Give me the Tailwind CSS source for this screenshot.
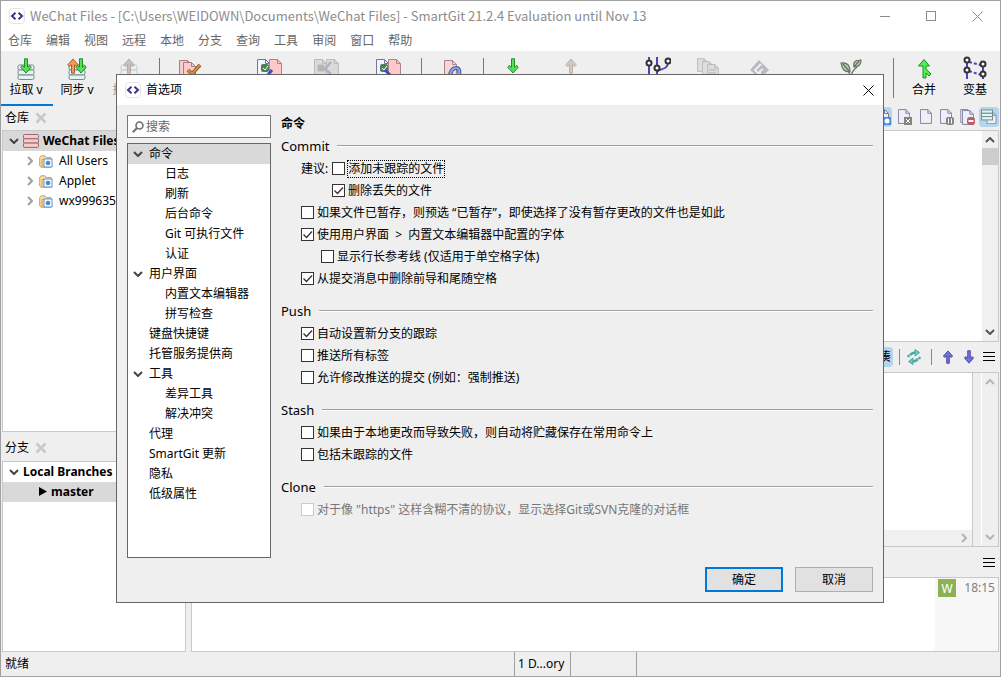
<!DOCTYPE html>
<html lang="zh-CN">
<head>
<meta charset="utf-8">
<title>SmartGit</title>
<script src="https://cdn.jsdelivr.net/npm/@tailwindcss/browser@4"></script>
</head>
<body class="relative h-screen overflow-hidden bg-[#efefef] font-['Noto_Sans','Noto_Sans_CJK_SC',sans-serif] text-[12px] leading-5 text-black">

<svg class="hidden">
  <symbol id="logo" viewBox="0 0 16 16"><rect x=".5" y=".5" width="15" height="15" rx="3" fill="#fff" stroke="#e4e4e8"/><path d="M6.500 4.800 3 8l3.500 3.200M9.500 4.800 13 8l-3.500 3.200" fill="none" stroke="#3c3784" stroke-width="2"/></symbol>
  <symbol id="down" viewBox="0 0 10 6"><path d="M1 1l4 4 4-4" fill="none" stroke="currentColor" stroke-width="2"/></symbol>
  <symbol id="right" viewBox="0 0 6 10"><path d="M1 1l4 4-4 4" fill="none" stroke="currentColor" stroke-width="2"/></symbol>
  <symbol id="cross" viewBox="0 0 12 12"><path d="M1.500 1.500l9 9M10.500 1.500l-9 9" fill="none" stroke="currentColor" stroke-width="2.600"/></symbol>
  <symbol id="thin-x" viewBox="0 0 11 11"><path d="M.5.5l10 10M10.500.5l-10 10" fill="none" stroke="currentColor"/></symbol>
  <symbol id="tick" viewBox="0 0 13 13"><path d="M2.500 6.500l3 3 5.500-6" fill="none" stroke="#333" stroke-width="1.300"/></symbol>
  <symbol id="menu" viewBox="0 0 12 10"><path d="M0 0h12v1H0zM0 4h12v1H0zM0 8h12v1H0z" fill="#000" shape-rendering="crispEdges"/></symbol>
  <symbol id="arrow-down" viewBox="0 0 12 16"><path d="M4.500.8h3v8.400l2.200-1.700 1.600 1.600L6 15 .7 9.100l1.600-1.600 2.200 1.700z" stroke-width="1"/></symbol>
  <symbol id="arrow-up" viewBox="0 0 12 16"><path d="M4.500 15.200h3V6.800l2.200 1.700 1.600-1.600L6 1 .7 6.900l1.600 1.600 2.200-1.700z" stroke-width="1"/></symbol>
  <symbol id="disk" viewBox="0 0 18 16"><g fill="#e4f2f2" stroke="#76898c"><rect x="1" y="1" width="16" height="5" rx="1.500"/><rect x="1" y="6" width="16" height="5" rx="1.500"/><rect x="1" y="11" width="16" height="4.500" rx="1.500"/></g></symbol>
  <symbol id="page" viewBox="0 0 13 16"><path d="M.5.5h8l4 4v11H.5z"/><path d="M8.500.5v4h4" fill="none"/></symbol>
  <symbol id="folder" viewBox="0 0 14 13"><path d="M.7 11V2.500L2 .8h4l1.200 1.700H12v9.700H2z" fill="#f6dfa8" stroke="#d2a052"/><path d="M3 12V4.500h9" fill="none" stroke="#d2a052"/><rect x="5" y="4" width="8" height="8" fill="#fff" stroke="#5e93d2"/><circle cx="9" cy="8" r="2" fill="#4a86cc"/><path d="M6.500 8h5M9 5.500v5M7.200 6.200l3.600 3.600M10.800 6.200L7.200 9.800" stroke="#4a86cc" stroke-width=".8"/></symbol>
</svg>

<div class="flex h-full flex-col border border-[#a0a0a0]">
  <!-- Title bar -->
  <header class="flex h-[30px] shrink-0 items-center bg-white pl-2 pr-4 text-[#8c8c8c]">
    <svg class="size-4"><use href="#logo"/></svg>
    <h1 class="ml-[5px] flex-1 whitespace-nowrap font-['Noto_Sans_CJK_SC',sans-serif] text-[13px]">WeChat Files - [C:\Users\WEIDOWN\Documents\WeChat Files] - SmartGit 21.2.4 Evaluation until Nov 13</h1>
    <button aria-label="最小化" class="grid h-5 w-[46px] place-items-center"><span class="h-px w-[10px] bg-current"></span></button>
    <button aria-label="最大化" class="grid h-5 w-[46px] place-items-center"><span class="size-[10px] border border-current"></span></button>
    <button aria-label="关闭" class="-mr-4 grid h-5 w-[46px] place-items-center"><svg class="size-[11px]"><use href="#thin-x"/></svg></button>
  </header>
  <nav class="flex h-5 shrink-0 items-center gap-[14px] bg-white px-[7px] text-[#666]">
    <a href="#">仓库</a><a href="#">编辑</a><a href="#">视图</a><a href="#">远程</a><a href="#">本地</a><a href="#">分支</a><a href="#">查询</a><a href="#">工具</a><a href="#">审阅</a><a href="#">窗口</a><a href="#">帮助</a>
  </nav>

  <!-- Toolbar -->
  <div class="flex h-[53px] shrink-0 items-start overflow-hidden whitespace-nowrap pt-[5px]">
    <button class="flex w-[50px] shrink-0 flex-col items-center"><svg class="h-6 w-7" viewBox="0 0 28 24"><use href="#disk" x="5" y="8" width="18" height="16"/><use href="#arrow-down" x="8" y="2" width="12" height="16" fill="#55e055" stroke="#228b2c"/></svg>拉取 v</button>
    <button class="flex w-[52px] shrink-0 flex-col items-center"><svg class="h-6 w-7" viewBox="0 0 28 24"><use href="#disk" x="5" y="8" width="18" height="16"/><use href="#arrow-up" x="4" y="2" width="12" height="16" fill="#f09a58" stroke="#b06020"/><use href="#arrow-down" x="12" y="2" width="12" height="16" fill="#55e055" stroke="#228b2c"/></svg>同步 v</button>
    <button class="flex w-[52px] shrink-0 flex-col items-center text-[#999]"><svg class="h-6 w-7" viewBox="0 0 28 24"><g opacity=".35"><use href="#disk" x="5" y="8" width="18" height="16"/></g><use href="#arrow-up" x="8" y="2" width="12" height="16" fill="#c9bfb8" stroke="#b5aca6"/></svg>推送 v</button>
    <span class="ml-1 mt-[2px] h-10 w-px shrink-0 bg-[#777]"></span>
    <button aria-label="提交" class="flex w-[60px] shrink-0 justify-center"><svg class="h-6 w-7" viewBox="0 0 28 24" fill="#f8cccc" stroke="#a87c80"><use href="#page" x="3" y="4" width="13" height="16"/><use href="#page" x="7" y="6" width="13" height="16"/><path d="M12 14l4 4 8-9" fill="none" stroke="#7c4f25" stroke-width="3.500"/><path d="M12 14l4 4 8-9" fill="none" stroke="#e08a40" stroke-width="2"/></svg></button>
    <button aria-label="暂存" class="ml-5 flex w-[58px] shrink-0 justify-center"><svg class="h-6 w-7" viewBox="0 0 28 24" fill="#f3f3ff" stroke="#76769c"><use href="#page" x="2" y="3" width="13" height="16"/><g fill="#ffc9c9" stroke="#b08484"><use href="#page" x="14" y="3" width="13" height="16"/></g><rect x="6" y="8" width="8" height="8" rx="2" fill="#4c8155" stroke="none"/><path d="M8 12l2 2 3-4" fill="none" stroke="#fff"/><path d="M17 14l-5 6" stroke="#4545dd" stroke-width="3"/></svg></button>
    <button aria-label="取消暂存" class="flex w-[56px] shrink-0 justify-center"><svg class="h-6 w-7" viewBox="0 0 28 24" fill="#dadada" stroke="#bbb"><use href="#page" x="2" y="3" width="13" height="16"/><use href="#page" x="14" y="3" width="13" height="16"/><rect x="6" y="9" width="6" height="6" fill="#b5b5b5"/><path d="M19 6l-6 7 6 5" fill="none" stroke="#b0b0c0" stroke-width="2.500"/></svg></button>
    <button aria-label="索引编辑器" class="flex w-[67px] shrink-0 justify-center"><svg class="h-6 w-7" viewBox="0 0 28 24" fill="#f3f3ff" stroke="#76769c"><use href="#page" x="2" y="3" width="13" height="16"/><g fill="#ffc9c9" stroke="#b08484"><use href="#page" x="14" y="3" width="13" height="16"/></g><rect x="6" y="8" width="8" height="8" rx="2" fill="#4c8155" stroke="none"/><path d="M8 12l2 2 3-4" fill="none" stroke="#fff"/><path d="M11 14l6 6" stroke="#4545dd" stroke-width="3"/></svg></button>
    <span class="mt-[2px] h-10 w-px shrink-0 bg-[#777]"></span>
    <button aria-label="丢弃" class="flex w-[61px] shrink-0 justify-center"><svg class="h-6 w-7" viewBox="0 0 28 24"><g fill="#fbd5d5" stroke="#a98488"><use href="#page" x="5" y="4" width="13" height="16"/></g><path d="M11 21c0-6 3-9 6-9s4 3 3 6" fill="none" stroke="#42589c" stroke-width="4"/><path d="M11 21c0-6 3-9 6-9s4 3 3 6" fill="none" stroke="#8fa6e6" stroke-width="2.200"/></svg></button>
    <span class="mt-[2px] h-10 w-px shrink-0 bg-[#777]"></span>
    <button aria-label="应用" class="flex w-[58px] shrink-0 justify-center"><svg class="mt-[2px] h-4 w-3" fill="#55e055" stroke="#228b2c"><use href="#arrow-down"/></svg></button>
    <button aria-label="贮藏" class="flex w-[58px] shrink-0 justify-center"><svg class="mt-[2px] h-4 w-3" fill="#d3c9c2" stroke="#bbb1aa"><use href="#arrow-up"/></svg></button>
    <button aria-label="日志" class="ml-[31px] flex w-[52px] shrink-0 justify-center"><svg class="h-6 w-7" viewBox="0 0 28 24" fill="#fff"><path d="M6 1v22M14 1v22M14 16c2-4 10-1 11-9" fill="none" stroke="#4a45b0" stroke-width="2"/><g stroke="#333" stroke-width="2"><circle cx="6" cy="7" r="2.500"/><circle cx="14" cy="12" r="2.500"/><circle cx="25" cy="5" r="2.500"/></g></svg></button>
    <button aria-label="责备" class="flex w-[50px] shrink-0 justify-center"><svg class="h-6 w-7" viewBox="0 0 28 24" fill="#dedede" stroke="#b5b5b5"><use href="#page" x="3" y="2" width="11" height="14"/><use href="#page" x="8" y="5" width="11" height="14"/><use href="#page" x="13" y="8" width="12" height="14"/><path d="M15 14h7M15 17h7"/></svg></button>
    <button aria-label="冲突" class="flex w-[54px] shrink-0 justify-center"><svg class="h-6 w-7" viewBox="0 0 28 24"><path d="M13 4l10 10-9 9L4 14z" fill="#b9b9c4"/><path d="M15 8l-6 6 5 5v-4l3-2" fill="none" stroke="#efefef" stroke-width="2"/></svg></button>
    <button aria-label="Git-Flow" class="ml-[33px] flex w-[62px] shrink-0 justify-center"><svg class="h-6 w-7" viewBox="0 0 28 24" fill="#b7ccb0" stroke="#66705f" stroke-width="1.200"><path d="M14 22c0-5 2-8 6-11M14 20l-3-5" fill="none"/><path d="M4 7c6-1 9 2 9 9-6 0-8-3-9-9zM24 4c-6 0-8 2-7 7 5 0 7-3 7-7z"/><path d="M6 8l6 7M22 5l-5 6" fill="none"/></svg></button>
    <span class="ml-[11px] mt-[2px] h-10 w-px shrink-0 bg-[#777]"></span>
    <button class="flex w-[60px] shrink-0 flex-col items-center"><svg class="h-6 w-7" viewBox="0 0 28 24"><path d="M13 22V10H8.500L14 3.500 19.500 10H16v3l5 5-2 2-3-3v5z" fill="#4df04d" stroke="#228b2c"/></svg>合并</button>
    <button class="flex w-[42px] shrink-0 flex-col items-center"><svg class="h-6 w-7" viewBox="0 0 28 24"><path d="M6 6v17M22 9v14" stroke="#4a45b0" stroke-width="2"/><path d="M8 6l12 3M8 15l12 4" stroke="#4a45b0" stroke-width="2" stroke-dasharray="3 2"/><g fill="#fff" stroke="#333" stroke-width="2"><circle cx="6" cy="4" r="2.500"/><circle cx="6" cy="14" r="2.500"/><circle cx="22" cy="8" r="2.500"/><circle cx="22" cy="18" r="2.500"/></g></svg>变基</button>
  </div>

  <!-- Panes -->
  <main class="flex min-h-0 flex-1 gap-[5px] px-px">
    <aside class="flex w-[184px] shrink-0 flex-col">
      <div class="h-[26px] shrink-0"><div class="-ml-px flex h-[25px] w-[52px] items-center gap-[6px] border-t-2 border-[#0078d7] pl-1">仓库<button aria-label="关闭仓库"><svg class="block size-3 text-[#c8c8c8]"><use href="#cross"/></svg></button></div></div>
      <div class="flex-[302] border border-[#c8c8c8] bg-white">
        <div class="flex h-5 items-center bg-[#d9d9d9] pl-[6px] font-bold"><svg class="h-[6px] w-[10px] text-[#444]"><use href="#down"/></svg>
          <svg class="mx-1 h-[14px] w-4" viewBox="0 0 16 14" fill="#f8caca" stroke="#96696c"><rect x=".5" y=".5" width="15" height="4.300" rx="1"/><rect x=".5" y="4.800" width="15" height="4.300" rx="1"/><rect x=".5" y="9.100" width="15" height="4.300" rx="1"/></svg>WeChat Files</div>
        <div class="flex h-5 items-center pl-6"><svg class="h-[10px] w-[6px] text-[#a0a0a0]"><use href="#right"/></svg><svg class="mx-[6px] h-[13px] w-[14px]"><use href="#folder"/></svg>All Users</div>
        <div class="flex h-5 items-center pl-6"><svg class="h-[10px] w-[6px] text-[#a0a0a0]"><use href="#right"/></svg><svg class="mx-[6px] h-[13px] w-[14px]"><use href="#folder"/></svg>Applet</div>
        <div class="flex h-5 items-center pl-6"><svg class="h-[10px] w-[6px] text-[#a0a0a0]"><use href="#right"/></svg><svg class="mx-[6px] h-[13px] w-[14px]"><use href="#folder"/></svg>wx999635</div>
      </div>
      <div class="flex h-[29px] shrink-0 items-center gap-[6px] pl-[3px] pt-1">分支<button aria-label="关闭分支"><svg class="block size-3 text-[#c8c8c8]"><use href="#cross"/></svg></button></div>
      <div class="flex-[191] border border-[#c8c8c8] bg-white font-bold">
        <div class="flex h-5 items-center gap-1 pl-[6px]"><svg class="h-[6px] w-[10px] text-[#444]"><use href="#down"/></svg>Local Branches</div>
        <div class="flex h-5 items-center gap-1 bg-[#d9d9d9] pl-9"><svg class="h-[9px] w-2"><path d="M0 0l8 4.500L0 9z"/></svg>master</div>
      </div>
    </aside>

    <section class="flex min-w-0 flex-1 flex-col">
      <div class="flex h-[26px] shrink-0 items-center justify-end gap-[3px]">
        <span class="grid h-5 w-[18px] place-items-center rounded-sm bg-[#b5d5ee]"><svg class="h-4 w-[15px]" viewBox="0 0 15 16" fill="#eeeef8" stroke="#7b7b9e"><use href="#page" width="13" height="16"/><rect x="7" y="8" width="8" height="8" fill="#4a8ad2" stroke="none"/><circle cx="11" cy="12" r="2.500" fill="#fff" stroke="none"/></svg></span>
        <span class="grid h-5 w-[18px] place-items-center"><svg class="h-4 w-[15px]" viewBox="0 0 15 16" fill="#eeeef8" stroke="#7b7b9e"><use href="#page" x="1" width="12" height="15"/><rect x="7" y="8" width="8" height="8" fill="#858580" stroke="none"/><path d="M9 10l4 4M13 10l-4 4" stroke="#fff"/></svg></span>
        <span class="grid h-5 w-[18px] place-items-center"><svg class="h-4 w-[15px]" viewBox="0 0 15 16" fill="#eeeef8" stroke="#7b7b9e"><use href="#page" x="2" width="12" height="15"/></svg></span>
        <span class="grid h-5 w-[18px] place-items-center"><svg class="h-4 w-[15px]" viewBox="0 0 15 16" fill="#eeeef8" stroke="#7b7b9e"><use href="#page" x="1" width="12" height="15"/><rect x="7" y="8" width="8" height="8" rx="2" fill="#858580" stroke="none"/><path d="M9.500 9.500v5M12.500 9.500v5" stroke="#fff"/></svg></span>
        <span class="grid h-5 w-[18px] place-items-center"><svg class="h-4 w-[15px]" viewBox="0 0 15 16" fill="#eeeef8" stroke="#7b7b9e"><use href="#page" width="12" height="14"/><use href="#page" x="2" y="1" width="12" height="15"/><rect x="7" y="8" width="8" height="8" rx="3" fill="#bd5c62" stroke="none"/><path d="M8.500 12h5" stroke="#fff" stroke-width="2"/></svg></span>
        <span class="grid size-5 place-items-center rounded-sm bg-[#b5d5ee]"><svg class="h-4 w-[17px]" viewBox="0 0 17 16" fill="#eeeef8" stroke="#7b7b9e"><use href="#page" x="5" y="3" width="11" height="12"/><g fill="#e4f4f0" stroke="#71908c"><rect x=".5" y="1" width="11" height="3.300"/><rect x=".5" y="4.300" width="11" height="3.300"/><rect x=".5" y="7.600" width="11" height="3.300"/></g></svg></span>
      </div>
      <div class="flex flex-[213] justify-end border border-[#c8c8c8] bg-white">
        <div class="flex w-4 flex-col items-center bg-[#f0f0f0] py-[6px] text-[#555]"><svg class="h-[6px] w-[10px] shrink-0 rotate-180"><use href="#down"/></svg><span class="mt-[5px] h-[17px] w-full bg-[#cdcdcd]"></span><span class="flex-1"></span><svg class="h-[6px] w-[10px]"><use href="#down"/></svg></div>
      </div>
      <div class="flex h-[30px] shrink-0 items-center justify-end pr-1">
        <button class="rounded-sm bg-[#b5d5ee] px-[2px]">紧凑</button>
        <span class="ml-[6px] h-4 w-px bg-[#888]"></span>
        <svg class="ml-[6px] mr-[9px] size-4" viewBox="0 0 16 16" fill="none"><path d="M4 6q3-3 6-2.500M12 10q-3 3-6 2.500M2 8l1-2M14 8l-1 2" stroke="#4aa9a2" stroke-width="2.500"/><path d="M9 .5l4.500 3L9 7zM7 9v6.500l-4.500-3z" fill="#66c8be" stroke="#4aa9a2"/></svg>
        <span class="h-4 w-px bg-[#888]"></span>
        <svg class="ml-[10px] h-[14px] w-3" fill="#7272dc" stroke="#45459c"><use href="#arrow-up" width="12" height="14"/></svg>
        <svg class="ml-[9px] h-[14px] w-3" fill="#7272dc" stroke="#45459c"><use href="#arrow-down" width="12" height="14"/></svg>
        <button aria-label="菜单" class="ml-2"><svg class="block h-[10px] w-3"><use href="#menu"/></svg></button>
      </div>
      <div class="flex flex-[175] border border-[#c8c8c8]">
        <div class="flex flex-1 flex-col justify-end border-r border-[#c8c8c8] bg-white"><div class="flex h-4 items-center justify-end bg-[#f0f0f0] pr-[5px]"><svg class="h-[10px] w-[6px] text-[#b5b5b5]"><use href="#right"/></svg></div></div>
        <div class="ml-2 flex w-[17px] flex-col items-center justify-between border-l border-white py-[6px] text-[#b5b5b5]"><svg class="h-[6px] w-[10px] rotate-180"><use href="#down"/></svg><svg class="h-[6px] w-[10px]"><use href="#down"/></svg></div>
      </div>
      <div class="flex h-[30px] shrink-0 items-center justify-end pr-1 pt-[2px]"><button aria-label="菜单"><svg class="block h-[10px] w-3"><use href="#menu"/></svg></button></div>
      <div class="flex flex-[74] justify-end border border-[#c8c8c8] bg-white">
        <div class="flex w-[63px] items-start justify-between bg-[#f7f7f7] pl-[3px] pr-[3px] pt-px text-[#808080]"><span class="grid size-[18px] place-items-center bg-[#8db255] text-white">W</span><span class="leading-[18px]">18:15</span></div>
      </div>
    </section>
  </main>

  <!-- Status bar -->
  <footer class="flex h-6 shrink-0">
    <span class="flex-1 pl-1 leading-6">就绪</span>
    <span class="w-[56px] whitespace-nowrap border-l border-[#a0a0a0] pl-[3px] leading-6">1 D...ory</span>
    <span class="w-[66px] border-l border-[#a0a0a0]"></span>
    <span class="w-[364px] border-l border-[#a0a0a0]"></span>
  </footer>
</div>

<!-- Preferences window -->
<div role="dialog" aria-labelledby="dialog-title" class="absolute left-[116px] right-[117px] top-[74px] border border-[#666] bg-[#efefef]">
  <div class="flex h-[30px] items-center bg-white pl-2 pr-[9px]">
    <svg class="size-4"><use href="#logo"/></svg>
    <h2 id="dialog-title" class="ml-[5px] flex-1">首选项</h2>
    <button aria-label="关闭"><svg class="block size-[11px]"><use href="#thin-x"/></svg></button>
  </div>
  <div class="flex gap-[10px] px-[10px] pt-[10px]">
    <div class="w-[144px] shrink-0">
      <label class="flex h-[23px] items-center gap-[2px] border border-[#777] bg-white px-1">
        <svg class="size-3 shrink-0" viewBox="0 0 12 12" fill="none" stroke="#707070"><circle cx="7.500" cy="4.500" r="3.500" stroke-width="1.600"/><path d="M5 7L.8 11.200" stroke-width="2"/></svg>
        <input aria-label="搜索" placeholder="搜索" class="w-full min-w-0 outline-none placeholder:text-[#666]">
      </label>
      <ul class="mt-[5px] h-[415px] border border-[#666] bg-white">
        <li class="flex h-5 items-center gap-[6px] bg-[#d9d9d9] pl-[5px]"><svg class="h-[6px] w-[10px] text-[#444]"><use href="#down"/></svg>命令</li>
        <li class="pl-[37px]">日志</li>
        <li class="pl-[37px]">刷新</li>
        <li class="pl-[37px]">后台命令</li>
        <li class="pl-[37px]">Git 可执行文件</li>
        <li class="pl-[37px]">认证</li>
        <li class="flex h-5 items-center gap-[6px] pl-[5px]"><svg class="h-[6px] w-[10px] text-[#444]"><use href="#down"/></svg>用户界面</li>
        <li class="pl-[37px]">内置文本编辑器</li>
        <li class="pl-[37px]">拼写检查</li>
        <li class="pl-[21px]">键盘快捷键</li>
        <li class="pl-[21px]">托管服务提供商</li>
        <li class="flex h-5 items-center gap-[6px] pl-[5px]"><svg class="h-[6px] w-[10px] text-[#444]"><use href="#down"/></svg>工具</li>
        <li class="pl-[37px]">差异工具</li>
        <li class="pl-[37px]">解决冲突</li>
        <li class="pl-[21px]">代理</li>
        <li class="pl-[21px]">SmartGit 更新</li>
        <li class="pl-[21px]">隐私</li>
        <li class="pl-[21px]">低级属性</li>
      </ul>
    </div>

    <div class="-mt-[2px] min-w-0 flex-1 whitespace-nowrap">
      <h3 class="h-[23px] font-bold leading-[22px]">命令</h3>
      <fieldset class="mb-[11px]">
        <div class="flex h-[22px] items-center gap-2 pb-[2px] text-[13px]">Commit<hr class="h-[2px] flex-1 border-b border-t border-b-white border-t-[#a0a0a0]"></div>
        <div class="flex h-[22px] items-center gap-1 pl-5">建议:
          <label class="flex items-center gap-[3px]"><input type="checkbox" class="mb-px size-[13px] appearance-none border border-[#333] bg-white"><span class="leading-4 outline-1 outline-dotted outline-black">添加未跟踪的文件</span></label></div>
        <label class="flex h-[22px] items-center gap-[3px] pl-[51px]"><span class="mb-px grid"><input type="checkbox" checked class="col-start-1 row-start-1 size-[13px] appearance-none border border-[#333] bg-white"><svg class="pointer-events-none col-start-1 row-start-1 size-[13px]"><use href="#tick"/></svg></span>删除丢失的文件</label>
        <label class="flex h-[22px] items-center gap-[3px] pl-5"><input type="checkbox" class="mb-px size-[13px] appearance-none border border-[#333] bg-white">如果文件已暂存，则预选 “已暂存”，即使选择了没有暂存更改的文件也是如此</label>
        <label class="flex h-[22px] items-center gap-[3px] pl-5"><span class="mb-px grid"><input type="checkbox" checked class="col-start-1 row-start-1 size-[13px] appearance-none border border-[#333] bg-white"><svg class="pointer-events-none col-start-1 row-start-1 size-[13px]"><use href="#tick"/></svg></span><span>使用用户界面 &nbsp;&gt;&nbsp; 内置文本编辑器中配置的字体</span></label>
        <label class="flex h-[22px] items-center gap-[3px] pl-10"><input type="checkbox" class="mb-px size-[13px] appearance-none border border-[#333] bg-white">显示行长参考线 (仅适用于单空格字体)</label>
        <label class="flex h-[22px] items-center gap-[3px] pl-5"><span class="mb-px grid"><input type="checkbox" checked class="col-start-1 row-start-1 size-[13px] appearance-none border border-[#333] bg-white"><svg class="pointer-events-none col-start-1 row-start-1 size-[13px]"><use href="#tick"/></svg></span>从提交消息中删除前导和尾随空格</label>
      </fieldset>
      <fieldset class="mb-[11px]">
        <div class="flex h-[22px] items-center gap-2 pb-[2px] text-[13px]">Push<hr class="h-[2px] flex-1 border-b border-t border-b-white border-t-[#a0a0a0]"></div>
        <label class="flex h-[22px] items-center gap-[3px] pl-5"><span class="mb-px grid"><input type="checkbox" checked class="col-start-1 row-start-1 size-[13px] appearance-none border border-[#333] bg-white"><svg class="pointer-events-none col-start-1 row-start-1 size-[13px]"><use href="#tick"/></svg></span>自动设置新分支的跟踪</label>
        <label class="flex h-[22px] items-center gap-[3px] pl-5"><input type="checkbox" class="mb-px size-[13px] appearance-none border border-[#333] bg-white">推送所有标签</label>
        <label class="flex h-[22px] items-center gap-[3px] pl-5"><input type="checkbox" class="mb-px size-[13px] appearance-none border border-[#333] bg-white">允许修改推送的提交 (例如：强制推送)</label>
      </fieldset>
      <fieldset class="mb-[11px]">
        <div class="flex h-[22px] items-center gap-2 pb-[2px] text-[13px]">Stash<hr class="h-[2px] flex-1 border-b border-t border-b-white border-t-[#a0a0a0]"></div>
        <label class="flex h-[22px] items-center gap-[3px] pl-5"><input type="checkbox" class="mb-px size-[13px] appearance-none border border-[#333] bg-white">如果由于本地更改而导致失败，则自动将贮藏保存在常用命令上</label>
        <label class="flex h-[22px] items-center gap-[3px] pl-5"><input type="checkbox" class="mb-px size-[13px] appearance-none border border-[#333] bg-white">包括未跟踪的文件</label>
      </fieldset>
      <fieldset>
        <div class="flex h-[22px] items-center gap-2 pb-[2px] text-[13px]">Clone<hr class="h-[2px] flex-1 border-b border-t border-b-white border-t-[#a0a0a0]"></div>
        <label class="flex h-[22px] items-center gap-[3px] pl-5 text-[#777]"><input type="checkbox" disabled class="mb-px size-[13px] appearance-none border border-[#ccc] bg-white">对于像 "https" 这样含糊不清的协议，显示选择Git或SVN克隆的对话框</label>
      </fieldset>
    </div>
  </div>
  <div class="flex justify-end gap-3 px-[10px] pb-[10px] pt-[9px]">
    <button class="h-[25px] w-[78px] border-2 border-[#0078d7] bg-[#e1e1e1]">确定</button>
    <button class="h-[25px] w-[78px] border border-[#adadad] bg-[#e1e1e1]">取消</button>
  </div>
</div>
</body>
</html>
